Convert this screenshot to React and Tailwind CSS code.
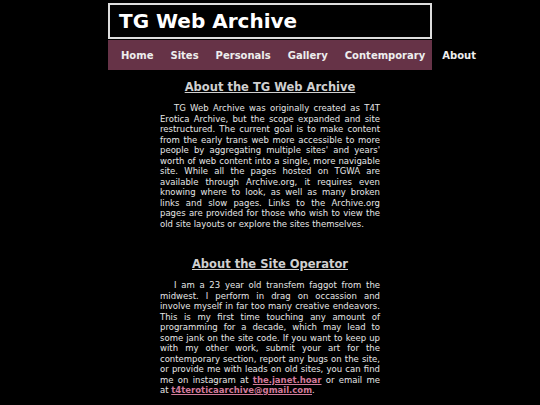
const navItems = ['Home', 'Sites', 'Personals', 'Gallery', 'Contemporary', 'About']

const aboutArchive = [
  'TG Web Archive was originally created as T4T',
  'Erotica Archive, but the scope expanded and site',
  'restructured. The current goal is to make content',
  'from the early trans web more accessible to more',
  "people by aggregating multiple sites' and years'",
  'worth of web content into a single, more navigable',
  'site. While all the pages hosted on TGWA are',
  'available through Archive.org, it requires even',
  'knowing where to look, as well as many broken',
  'links and slow pages. Links to the Archive.org',
  'pages are provided for those who wish to view the',
  'old site layouts or explore the sites themselves.',
]

function Link({ children }) {
  return <a href="#" className="font-bold underline text-[#d27a9a]">{children}</a>
}

const aboutOperator = [
  'I am a 23 year old transfem faggot from the',
  'midwest. I perform in drag on occassion and',
  'involve myself in far too many creative endeavors.',
  'This is my first time touching any amount of',
  'programming for a decade, which may lead to',
  'some jank on the site code. If you want to keep up',
  'with my other work, submit your art for the',
  'contemporary section, report any bugs on the site,',
  'or provide me with leads on old sites, you can find',
  <>me on instagram at <Link>the.janet.hoar</Link> or email me</>,
  <>at <Link>t4teroticaarchive@gmail.com</Link>.</>,
]

function Section({ title, lines, className }) {
  return (
    <section className={className}>
      <h2 className="text-center text-[11.5px] font-bold underline text-[#d0d0d0] leading-[17px]">
        {title}
      </h2>
      <p className="mt-[7px] text-[8.5px] leading-[10.5px] text-[#e6e6e6]">
        {lines.map((line, i) => (
          <span
            key={i}
            className={
              'block whitespace-nowrap ' +
              (i === lines.length - 1 ? 'text-left' : 'text-justify [text-align-last:justify]') +
              (i === 0 ? ' pl-[14px]' : '')
            }
          >
            {line}
          </span>
        ))}
      </p>
    </section>
  )
}

export default function App() {
  return (
    <div
      className="min-h-[405px] bg-black text-white"
      style={{ fontFamily: '"DejaVu Sans", Verdana, sans-serif' }}
    >
      <div className="mx-auto w-[324px] pt-[3px]">
        <header className="h-[36px] border-2 border-[#dddddd] flex items-center pl-[9px]">
          <h1 className="text-[20px] font-bold leading-none text-white">TG Web Archive</h1>
        </header>
        <nav className="mt-px h-[30px] bg-[#663347] flex items-center pl-[4.5px] whitespace-nowrap">
          {navItems.map((item) => (
            <a key={item} href="#" className="shrink-0 px-[8.5px] text-[10px] font-bold text-[#eeeeee]">
              {item}
            </a>
          ))}
        </nav>
      </div>

      <main className="mx-auto w-[220px] pt-[9px] pb-4">
        <Section title="About the TG Web Archive" lines={aboutArchive} />
        <Section title="About the Site Operator" lines={aboutOperator} className="mt-[27px]" />
      </main>
    </div>
  )
}
